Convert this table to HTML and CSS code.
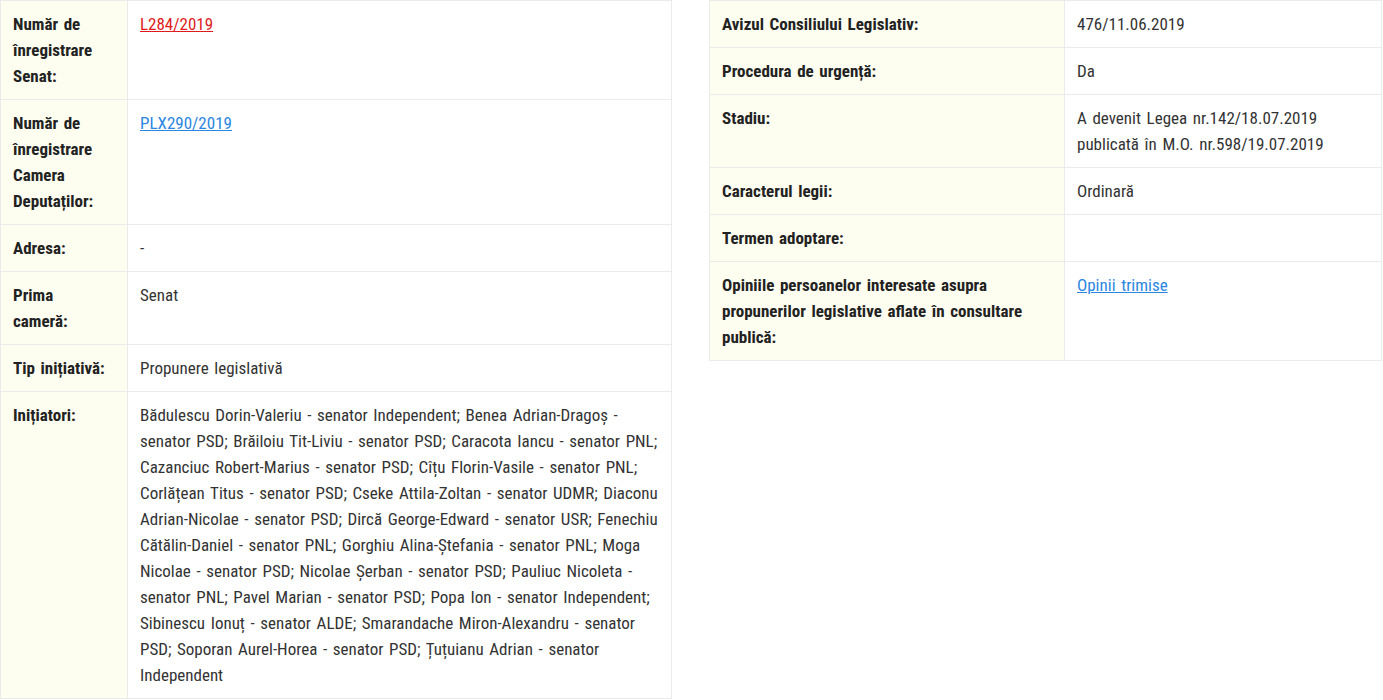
FILE: index.html
```html
<!DOCTYPE html>
<html lang="ro">
<head>
<meta charset="utf-8">
<title>Fișa propunerii legislative</title>
<link rel="stylesheet" href="styles.css">
</head>
<body>
<div class="page">
  <table class="info info-left">
    <tbody>
      <tr><th class="label">Număr de înregistrare Senat:</th><td class="value"><a class="link-red" href="#">L284/2019</a></td></tr>
      <tr><th class="label">Număr de înregistrare Camera Deputaților:</th><td class="value"><a class="link-blue" href="#">PLX290/2019</a></td></tr>
      <tr><th class="label">Adresa:</th><td class="value">-</td></tr>
      <tr><th class="label">Prima cameră:</th><td class="value">Senat</td></tr>
      <tr><th class="label">Tip inițiativă:</th><td class="value">Propunere legislativă</td></tr>
      <tr><th class="label">Inițiatori:</th><td class="value">Bădulescu Dorin-Valeriu - senator Independent; Benea Adrian-Dragoș - senator PSD; Brăiloiu Tit-Liviu - senator PSD; Caracota Iancu - senator PNL; Cazanciuc Robert-Marius - senator PSD; Cîțu Florin-Vasile - senator PNL; Corlățean Titus - senator PSD; Cseke Attila-Zoltan - senator UDMR; Diaconu Adrian-Nicolae - senator PSD; Dircă George-Edward - senator USR; Fenechiu Cătălin-Daniel - senator PNL; Gorghiu Alina-Ștefania - senator PNL; Moga Nicolae - senator PSD; Nicolae Șerban - senator PSD; Pauliuc Nicoleta - senator PNL; Pavel Marian - senator PSD; Popa Ion - senator Independent; Sibinescu Ionuț - senator ALDE; Smarandache Miron-Alexandru - senator PSD; Soporan Aurel-Horea - senator PSD; Țuțuianu Adrian - senator Independent</td></tr>
    </tbody>
  </table>
  <table class="info info-right">
    <tbody>
      <tr><th class="label">Avizul Consiliului Legislativ:</th><td class="value">476/11.06.2019</td></tr>
      <tr><th class="label">Procedura de urgență:</th><td class="value">Da</td></tr>
      <tr><th class="label">Stadiu:</th><td class="value">A devenit Legea nr.142/18.07.2019 publicată în M.O. nr.598/19.07.2019</td></tr>
      <tr><th class="label">Caracterul legii:</th><td class="value">Ordinară</td></tr>
      <tr><th class="label">Termen adoptare:</th><td class="value"></td></tr>
      <tr><th class="label">Opiniile persoanelor interesate asupra propunerilor legislative aflate în consultare publică:</th><td class="value"><a class="link-blue" href="#">Opinii trimise</a></td></tr>
    </tbody>
  </table>
</div>
</body>
</html>
```
FILE: styles.css
```css
html, body {
  margin: 0;
  padding: 0;
  background: #ffffff;
}
body {
  font-family: "Roboto Condensed", "Roboto", "Liberation Sans", sans-serif;
  font-stretch: condensed;
  font-size: 17px;
  line-height: 26px;
  word-spacing: 1.7px;
  color: #333333;
}
.page {
  display: flex;
  align-items: flex-start;
  gap: 37px;
}
.info {
  border-collapse: collapse;
  table-layout: fixed;
}
.info-left {
  width: 672px;
}
.info-right {
  width: 673px;
}
.info th,
.info td {
  border: 1px solid #ebebeb;
  padding: 10px 12px;
  text-align: left;
  vertical-align: top;
}
.label {
  background: #fdfdf0;
  font-weight: 700;
  color: #222222;
}
.info-left .label {
  width: 96px;
  padding-right: 18px;
}
.info-right .label {
  width: 330px;
}
.value {
  font-weight: 400;
  color: #333333;
}
.link-red {
  color: #e01b1b;
  text-decoration: underline;
}
.link-blue {
  color: #2b86df;
  text-decoration: underline;
}
```
